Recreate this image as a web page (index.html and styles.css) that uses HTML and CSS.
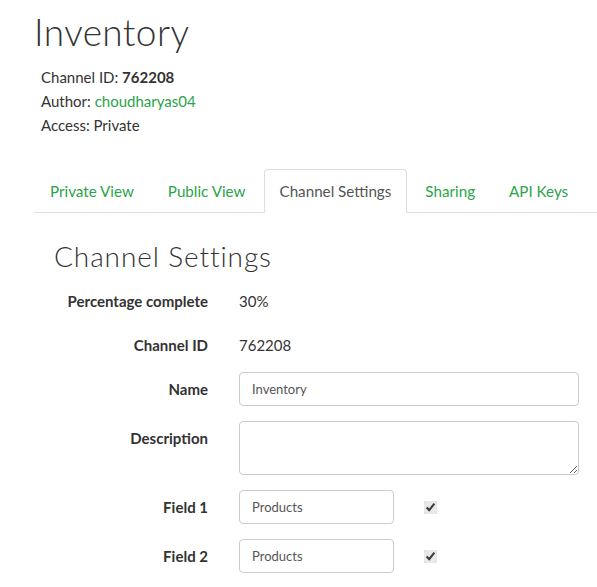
FILE: index.html
```html
<!DOCTYPE html>
<html lang="en">
  <head>
    <meta charset="UTF-8" />
    <meta name="viewport" content="width=device-width, initial-scale=1.0" />
    <title>Inventory - Channel Settings</title>
    <link rel="stylesheet" href="styles.css">
  </head>
  <body>
    <div class="page">
      <h1 class="channel-title">Inventory</h1>
      <div class="channel-info">
        <p>Channel ID: <strong>762208</strong></p>
        <p>Author: <a href="#">choudharyas04</a></p>
        <p>Access: Private</p>
      </div>

      <ul class="nav-tabs">
        <li><a href="#">Private View</a></li>
        <li><a href="#">Public View</a></li>
        <li class="active"><a href="#">Channel Settings</a></li>
        <li><a href="#">Sharing</a></li>
        <li><a href="#">API Keys</a></li>
      </ul>

      <div class="tab-content">
        <h2 class="section-title">Channel Settings</h2>
        <form class="settings-form">
          <div class="form-row">
            <label class="form-label">Percentage complete</label>
            <div class="form-value">30%</div>
          </div>
          <div class="form-row">
            <label class="form-label">Channel ID</label>
            <div class="form-value">762208</div>
          </div>
          <div class="form-row input-row">
            <label class="form-label">Name</label>
            <input class="form-control wide" type="text" value="Inventory">
          </div>
          <div class="form-row input-row">
            <label class="form-label">Description</label>
            <textarea class="form-control wide area"></textarea>
          </div>
          <div class="form-row input-row">
            <label class="form-label">Field 1</label>
            <div class="field-group">
              <input class="form-control narrow" type="text" value="Products">
              <input class="field-check" type="checkbox" checked>
            </div>
          </div>
          <div class="form-row input-row">
            <label class="form-label">Field 2</label>
            <div class="field-group">
              <input class="form-control narrow" type="text" value="Products">
              <input class="field-check" type="checkbox" checked>
            </div>
          </div>
        </form>
      </div>
    </div>
  </body>
</html>
```

FILE: styles.css
```css
body {
  margin: 0;
  background: #fff;
  color: #333;
  font-family: Lato, "Open Sans", sans-serif;
  font-size: 15px;
}

.page {
  padding-left: 34px;
}

a {
  color: #2aa44a;
  text-decoration: none;
}

.channel-title {
  margin: 0;
  padding-top: 11px;
  font-size: 37px;
  font-weight: 300;
  line-height: 42px;
  color: #333;
  letter-spacing: 0.4px;
}

.channel-info {
  margin-top: 12px;
  padding-left: 7px;
}

.channel-info p {
  margin: 0;
  line-height: 24px;
}

.channel-info strong {
  font-weight: 700;
}

.nav-tabs {
  display: flex;
  margin: 32px 0 0;
  padding: 0;
  list-style: none;
  border-bottom: 1px solid #ddd;
  font-size: 15.2px;
}

.nav-tabs li {
  margin-right: 2px;
  margin-bottom: -1px;
}

.nav-tabs a {
  display: block;
  padding: 0 15px;
  line-height: 42px;
  border: 1px solid transparent;
  border-radius: 4px 4px 0 0;
}

.nav-tabs .active a {
  color: #555;
  background: #fff;
  border-color: #ddd;
  border-bottom-color: transparent;
}

.tab-content {
  padding-left: 20px;
}

.section-title {
  margin: 0;
  padding-top: 26px;
  font-size: 28px;
  font-weight: 300;
  line-height: 34px;
  letter-spacing: 0.9px;
  color: #333;
}

.settings-form {
  margin-top: 11px;
}

.form-row {
  display: grid;
  grid-template-columns: 154px 1fr;
  column-gap: 31px;
  align-items: start;
  margin-bottom: 10px;
}

.input-row {
  margin-bottom: 15px;
}

.form-label {
  text-align: right;
  font-weight: 700;
  line-height: 20px;
  padding-top: 7px;
  color: #333;
}

.form-value {
  line-height: 20px;
  padding-top: 7px;
  height: 27px;
}

.form-control {
  box-sizing: border-box;
  height: 34px;
  padding: 6px 12px;
  font-family: Lato, "Open Sans", sans-serif;
  font-size: 13px;
  color: #555;
  background: #fff;
  border: 1px solid #ccc;
  border-radius: 4px;
}

.wide {
  width: 340px;
}

.area {
  display: block;
  height: 54px;
}

.field-group {
  display: flex;
  align-items: center;
}

.narrow {
  width: 155px;
}

.field-check {
  margin: 0 0 0 30px;
  width: 13px;
  height: 13px;
  accent-color: #e8e8e8;
}
```
